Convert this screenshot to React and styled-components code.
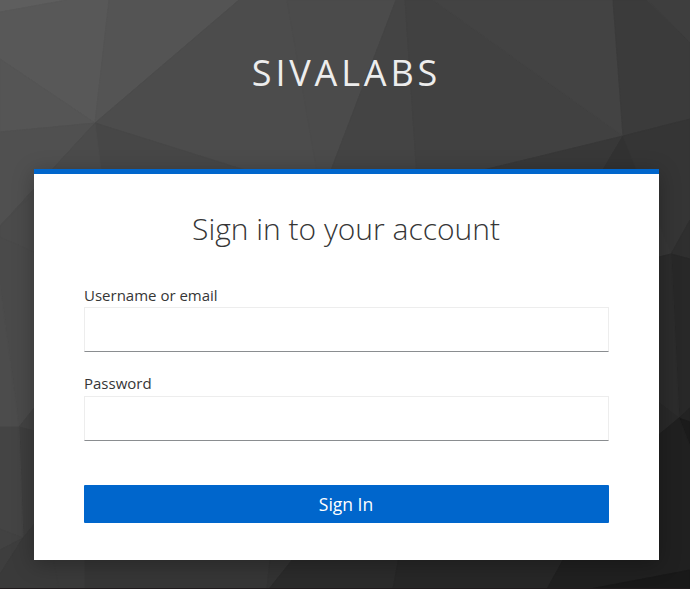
import React from "react";
import styled, { createGlobalStyle } from "styled-components";

const GlobalStyle = createGlobalStyle`
  *, *::before, *::after { box-sizing: border-box; }
  body {
    margin: 0;
    background: #3a3a3a;
    font-family: "Open Sans", "Noto Sans", sans-serif;
    color: #363636;
    overflow: hidden;
  }
`;

const Page = styled.div`
  display: grid;
  grid-template: 589px / 690px;
  overflow: hidden;
`;

const Backdrop = styled.svg`
  grid-area: 1 / 1;
  width: 690px;
  height: 589px;
`;

const Content = styled.main`
  grid-area: 1 / 1;
  z-index: 1;
  display: flex;
  flex-direction: column;
  padding: 0 31px 0 34px;
`;

const Brand = styled.header`
  height: 169px;
  padding-top: 48px;
  font-size: 36px;
  line-height: 49px;
  letter-spacing: 3.85px;
  text-align: center;
  text-transform: uppercase;
  color: #ededed;
`;

const Card = styled.section`
  height: 391px;
  border-top: 5px solid #0066cc;
  background: #fff;
  padding: 34px 50px 0;
  box-shadow: 0 4px 20px rgba(3, 3, 3, 0.28);
`;

const Title = styled.h1`
  margin: 0;
  height: 78px;
  padding-right: 1px;
  font-size: 30px;
  font-weight: 300;
  line-height: 42px;
  text-align: center;
  white-space: nowrap;
`;

const Form = styled.form`
  display: flex;
  flex-direction: column;
`;

const Field = styled.div`
  display: flex;
  flex-direction: column;
  height: ${(p) => p.$height}px;
`;

const Label = styled.label`
  height: 21px;
  font-size: 15px;
  line-height: ${(p) => p.$leading}px;
`;

const Input = styled.input`
  width: 100%;
  height: 45px;
  padding: 0 10px;
  border: 1px solid #ededed;
  border-bottom-color: #8a8d90;
  border-radius: 0;
  outline: none;
  background: #fff;
  font: inherit;
`;

const SubmitButton = styled.button`
  height: 38px;
  padding: 0 1px 0 0;
  border: 0;
  border-radius: 1px;
  background: #0066cc;
  color: #fff;
  font: 400 17.5px/38px "Open Sans", sans-serif;
`;

const facets = [
  ["0,0 67,0 0,12", "#5e5e5e"],
  ["67,0 109,0 95,123 0,59 0,12", "#585858"],
  ["0,59 95,123 0,132", "#555555"],
  ["0,132 95,123 0,226", "#505050"],
  ["109,0 239,0 95,123", "#545454"],
  ["239,0 287,0 318,175 262,175 95,123", "#4c4c4c"],
  ["95,123 270,178 102,178", "#474747"],
  ["95,123 102,178 34,252 0,237 0,226", "#4b4b4b"],
  ["287,0 396,0 328,178 318,178", "#4b4b4b"],
  ["396,0 405,0 417,178 328,178", "#444444"],
  ["405,0 433,0 623,136 450,178 417,178", "#414141"],
  ["433,0 613,0 623,136", "#434343"],
  ["613,0 647,0 690,42 690,119 623,136", "#3b3b3b"],
  ["647,0 690,0 690,42", "#3e3e3e"],
  ["623,136 598,178 450,178", "#383838"],
  ["623,136 640,178 598,178", "#323232"],
  ["623,136 690,119 690,220 671,254 640,178", "#353535"],
  ["640,178 671,254 650,259", "#373737"],
  ["690,220 690,259 671,254", "#2f2f2f"],
  ["671,254 690,259 690,408 679,418", "#282828"],
  ["671,254 679,418 650,396 650,259", "#2c2c2c"],
  ["690,408 690,422 679,418", "#232323"],
  ["679,418 650,442 650,396", "#292929"],
  ["679,418 690,422 690,446", "#1b1b1b"],
  ["0,226 0,237 50,259 50,178", "#4b4b4b"],
  ["0,237 50,259 50,388 19,427 0,285", "#4a4a4a"],
  ["0,285 19,427 0,427", "#4c4c4c"],
  ["19,427 50,388 50,435", "#434343"],
  ["19,427 50,435 50,505 23,538", "#3e3e3e"],
  ["0,427 19,427 23,538 0,529", "#444444"],
  ["0,529 23,538 0,550", "#424242"],
  ["0,550 23,538 0,574", "#3e3e3e"],
  ["23,538 50,505 50,560 59,589 0,589 0,574", "#3a3a3a"],
  ["50,540 85,540 85,589 59,589", "#3a3a3a"],
  ["85,540 272,540 267,589 85,589", "#363636"],
  ["272,540 308,540 269,589 267,589", "#333333"],
  ["308,540 402,540 393,589 269,589", "#2b2b2b"],
  ["402,540 574,540 547,589 393,589", "#272727"],
  ["574,540 650,442 679,418 690,446 690,570 590,589 547,589", "#202020"],
  ["690,570 690,589 590,589", "#191919"],
];

function PolygonBackdrop() {
  return (
    <Backdrop viewBox="0 0 690 589" aria-hidden="true">
      {facets.map(([points, fill]) => (
        <polygon key={points} points={points} fill={fill} stroke={fill} strokeLinejoin="round" />
      ))}
      <path d="M0 588.5H690" stroke="#201b1d" />
    </Backdrop>
  );
}

export default function App() {
  return (
    <>
      <GlobalStyle />
      <Page>
        <PolygonBackdrop />
        <Content>
          <Brand>SivaLabs</Brand>
          <Card>
            <Title>Sign in to your account</Title>
            <Form onSubmit={(e) => e.preventDefault()}>
              <Field $height={89}>
                <Label htmlFor="username" $leading={18}>Username or email</Label>
                <Input id="username" type="text" />
              </Field>
              <Field $height={110}>
                <Label htmlFor="password" $leading={16}>Password</Label>
                <Input id="password" type="password" />
              </Field>
              <SubmitButton type="submit">Sign In</SubmitButton>
            </Form>
          </Card>
        </Content>
      </Page>
    </>
  );
}
